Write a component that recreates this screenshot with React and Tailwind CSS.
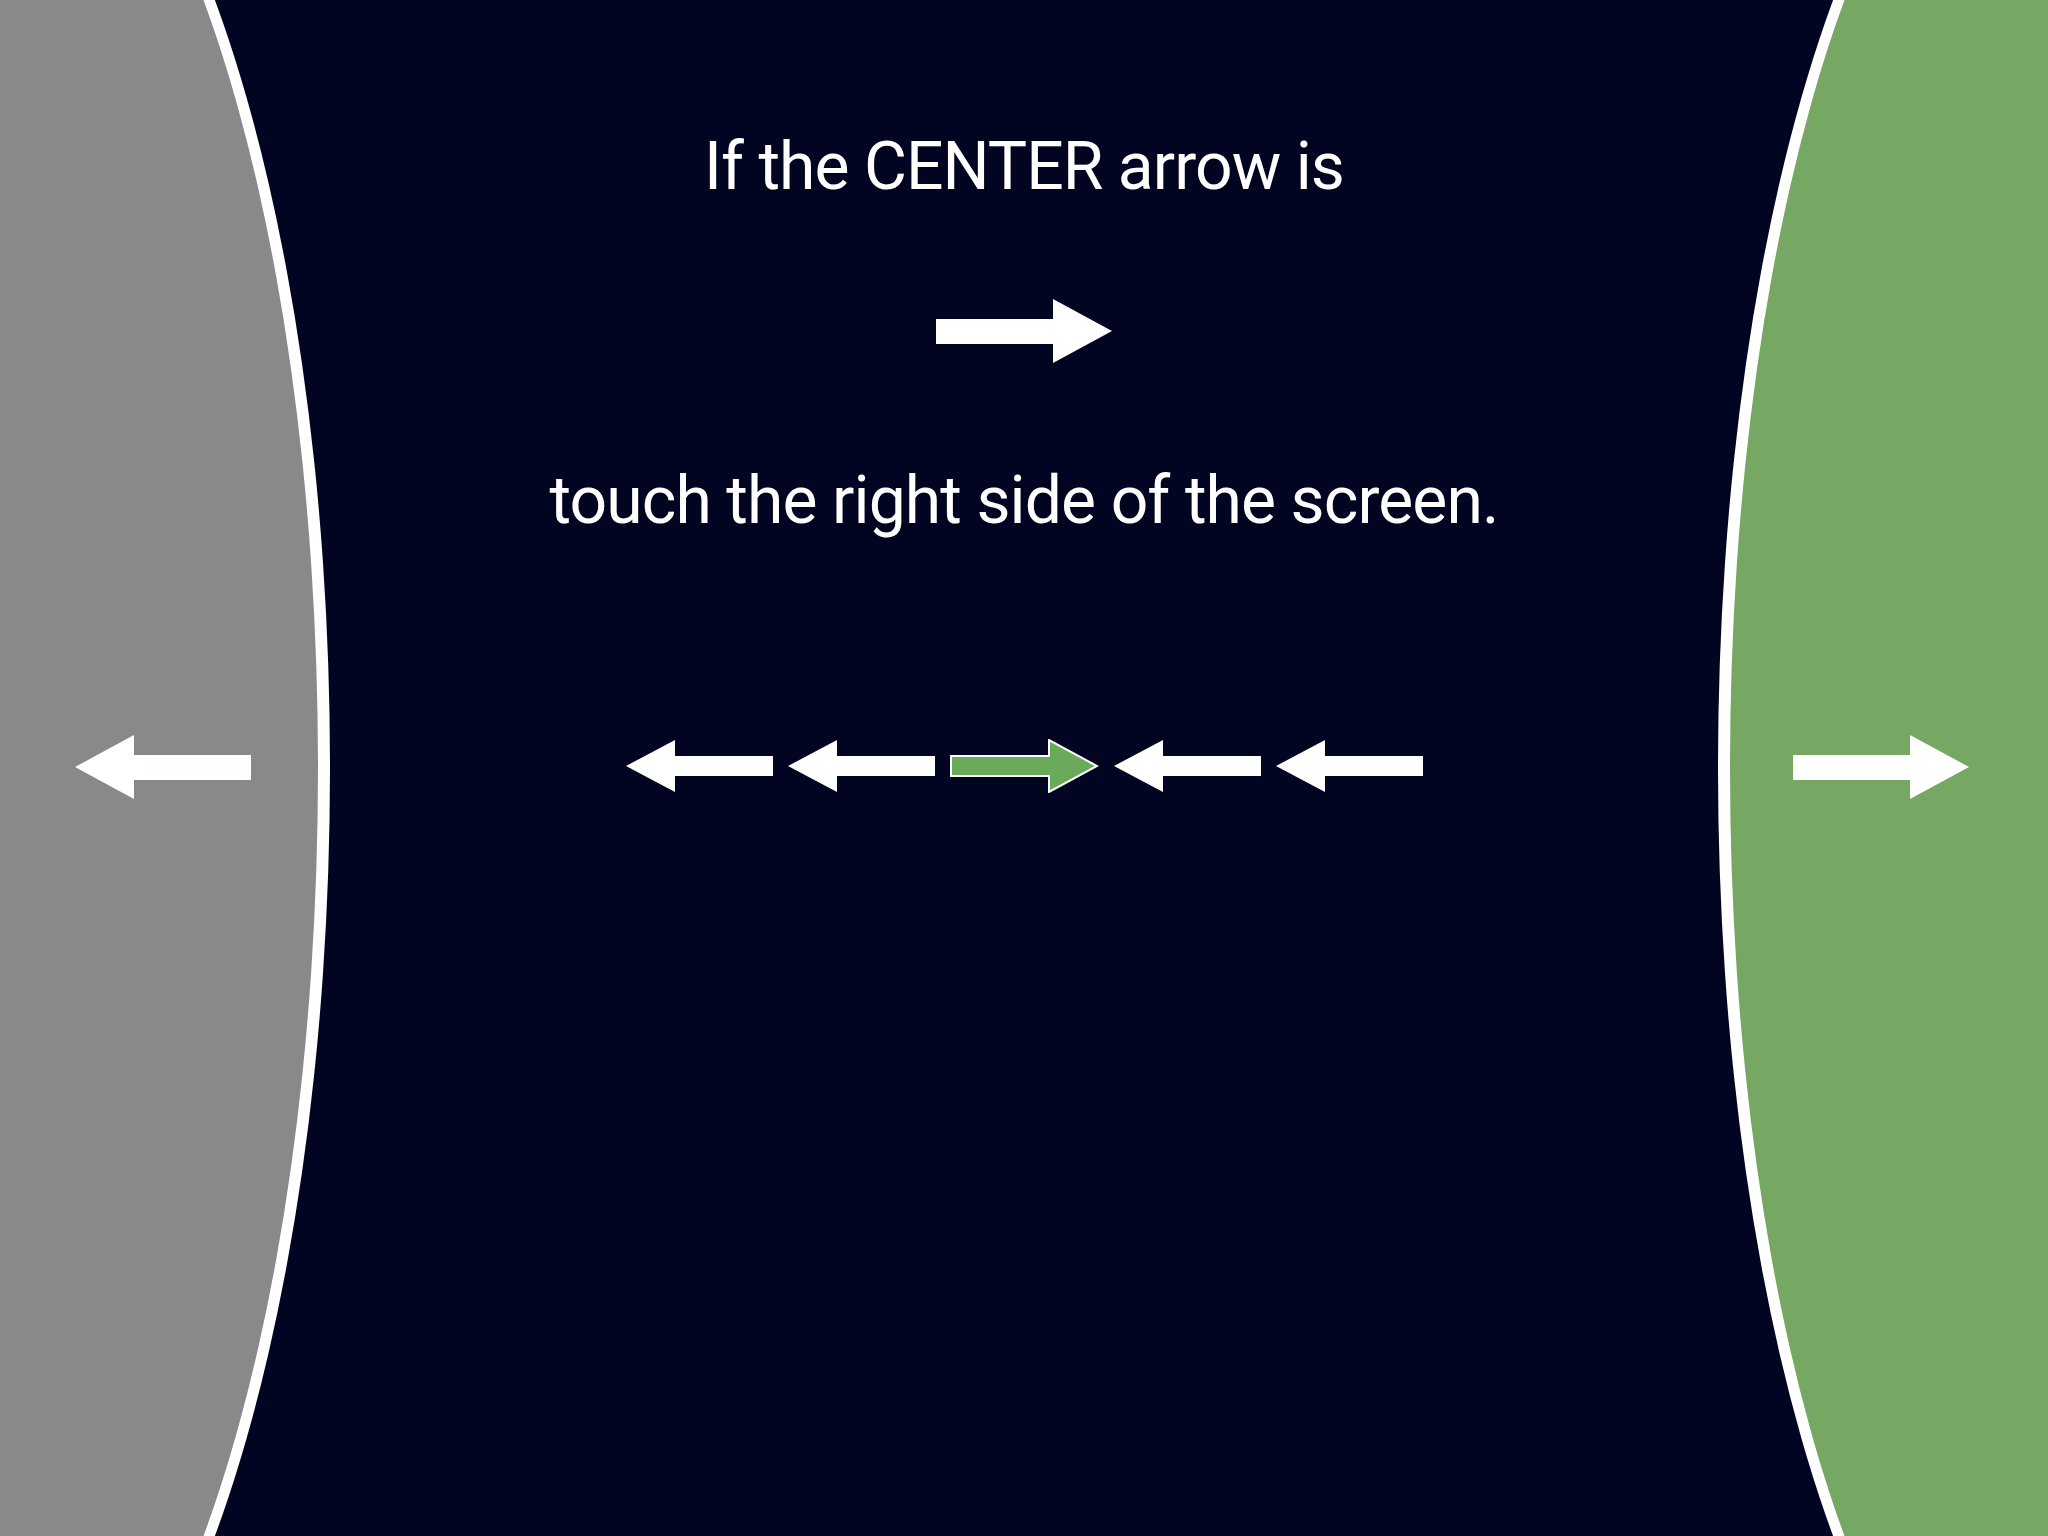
import React from 'react';

const BigArrow = ({ dir = 'right' }) => (
  <svg width="176" height="64" viewBox="0 0 176 64" className={dir === 'left' ? '-scale-x-100' : ''}>
    <polygon points="0,20 117,20 117,0 176,32 117,64 117,45 0,45" fill="#ffffff" />
  </svg>
);

const RowArrow = ({ green = false }) =>
  green ? (
    <svg width="149" height="54" viewBox="0 0 149 54">
      <polygon
        points="1,17 99,17 99,1 147,27 99,53 99,37 1,37"
        fill="#6aaa5b"
        stroke="#ffffff"
        strokeWidth="2"
      />
    </svg>
  ) : (
    <svg width="147" height="52" viewBox="0 0 147 52">
      <polygon points="0,26 49,0 49,16 147,16 147,36 49,36 49,52" fill="#ffffff" />
    </svg>
  );

export default function App() {
  return (
    <div
      className="relative w-full h-[1536px] overflow-hidden bg-[#020522] text-white"
      style={{ fontFamily: 'Roboto, "Noto Sans", sans-serif' }}
    >
      {/* Side panels */}
      <div className="absolute left-[-404px] top-[-288px] w-[734px] h-[2112px] rounded-[50%] border-[12px] border-white bg-[#8a888b]" />
      <div className="absolute left-[1718px] top-[-288px] w-[734px] h-[2112px] rounded-[50%] border-[12px] border-white bg-[#76a763]" />

      <div className="relative z-10 flex h-full">
        {/* Left target */}
        <div className="w-[326px] flex items-center justify-center pb-[2px]">
          <BigArrow dir="left" />
        </div>

        {/* Instructions */}
        <div className="flex-1 flex flex-col items-center pt-[127px]">
          <p className="text-[66px] leading-[80px] tracking-[-0.95px]">If the CENTER arrow is</p>
          <div className="mt-[92px] h-[64px]">
            <BigArrow />
          </div>
          <p className="mt-[98px] text-[66px] leading-[80px] tracking-[-0.9px]">touch the right side of the screen.</p>
          <div className="mt-[198px] flex items-center gap-[15px]">
            <RowArrow />
            <RowArrow />
            <RowArrow green />
            <RowArrow />
            <RowArrow />
          </div>
        </div>

        {/* Right target */}
        <div className="w-[326px] flex items-center justify-center pb-[2px] pr-[8px]">
          <BigArrow />
        </div>
      </div>
    </div>
  );
}
